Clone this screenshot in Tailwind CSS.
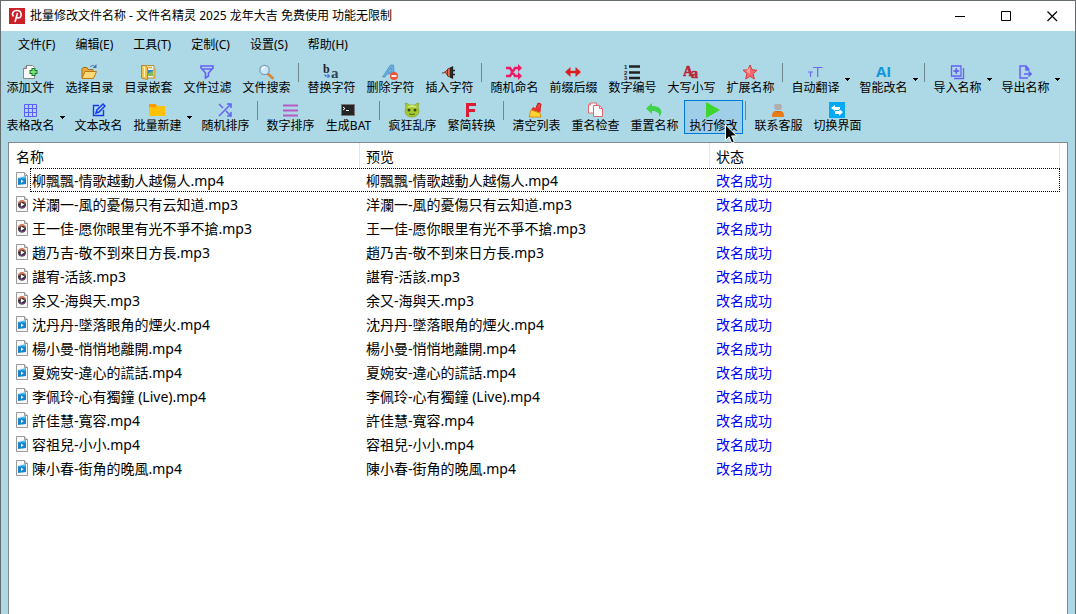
<!DOCTYPE html>
<html lang="zh-CN">
<head>
    <meta charset="UTF-8">
    <meta name="viewport" content="width=device-width, initial-scale=1.0">
    <title>批量修改文件名称</title>
    <script src="https://cdn.jsdelivr.net/npm/@tailwindcss/browser@4"></script>
</head>
<body class="font-['Noto_Sans','Noto_Sans_CJK_SC',sans-serif] text-black bg-[#add8e6]">
    <!-- 图标 -->
    <svg class="hidden">
        <symbol id="add" viewBox="0 0 16 16"><path d="M4.500 1.500h6l2 2v11h-11v-10z" fill="#f8f8f8" stroke="#888"/><path d="M4.500 1.500v3h-3" fill="#ccc" stroke="#777"/><path d="M11.500 4v8M7.500 8h8" stroke="#1b7a2b" stroke-width="4"/><path d="M11.500 5v6M8.500 8h6" stroke="#7be27b" stroke-width="2"/></symbol>
        <symbol id="open" viewBox="0 0 16 16"><path d="M1 14V4.500l1-1h4l1 2h5V8" fill="#e9a93a" stroke="#a87018"/><path d="M1 14.500l3-7h11.500l-3 7z" fill="#ffd878" stroke="#b87a1a"/><path d="M9 3c2-2 4-2 5 0" fill="none" stroke="#47729c"/><path d="M11.500 4h4V0z" fill="#47729c"/></symbol>
        <symbol id="nest" viewBox="0 0 16 16"><path d="M6 1.500h8v12.500H6z" fill="#e9f1f8" stroke="#b99338"/><path d="M7 6h6v6H7z" fill="#3b83c4"/><path d="M7 10l6-3v5H7z" fill="#82bd4e"/><path d="M1.500 1.500h4l2 2v12l-6-1.500z" fill="#f1c351" stroke="#b88824"/><path d="M3 3h1.500v10" stroke="#fff1a8" fill="none"/><path d="M8 3.500h4M13 5h2v9h-2" stroke="#e7ad31" fill="none" stroke-width="1.300"/></symbol>
        <symbol id="filter" viewBox="0 0 16 16"><path d="M2 2h12v2L9.500 9v3L6.500 14V9L2 4zM3 5h10" fill="none" stroke="#6461f5" stroke-width="1.600"/></symbol>
        <symbol id="search" viewBox="0 0 16 16"><path d="M9.500 9.500l5 4.500" stroke="#d78a38" stroke-width="3" stroke-linecap="round"/><circle cx="6.500" cy="6" r="4.700" fill="#c9e7fb" stroke="#829fba" stroke-width="1.300"/><path d="M4 5.500q1-2.500 3-2.500" fill="none" stroke="#fff" stroke-width="1.500"/></symbol>
        <symbol id="replace" viewBox="0 0 16 16"><text x="0" y="9" font-family="Liberation Serif" font-weight="bold" font-size="12" fill="#222">b</text><text x="8" y="14" font-family="Liberation Serif" font-weight="bold" font-size="15" fill="#345">a</text><path d="M2 10.500V12h4.500M4.500 10l2 2-2 2" fill="none" stroke="#2b58d8"/></symbol>
        <symbol id="delete" viewBox="0 0 16 16"><path d="M.5 13L8.500 1h3l1 12H9l-.3-3H5l-2 3zM6 8h3V4z" fill="#6aaee6" stroke="#377fbc" stroke-width=".6"/><circle cx="12" cy="12" r="4" fill="#ef5537"/><path d="M9.500 12h5" stroke="#fff" stroke-width="1.800"/></symbol>
        <symbol id="plug" viewBox="0 0 16 16"><path d="M1 9c2 0 3-1 4-1" fill="none" stroke="#666" stroke-width="1.500"/><path d="M4 8l3-3v7z" fill="#e8694b" stroke="#903325"/><path d="M6.500 5l3-1v9l-3-1z" fill="#e8694b" stroke="#7d2d22"/><path d="M9.500 4l2-1v11l-2-1zM11 6.500h3M11 10.500h3" fill="#333" stroke="#222" stroke-width="1.300"/></symbol>
        <symbol id="shuffle" viewBox="0 0 16 16"><path d="M0 4h4l5 8h4M0 12h4l5-8h4" fill="none" stroke="#ee1b64" stroke-width="2.400"/><path d="M12 0l4 4-4 4zM12 8l4 4-4 4z" fill="#ee1b64"/></symbol>
        <symbol id="width" viewBox="0 0 16 16"><path d="M3 8h10" stroke="#d91f1f" stroke-width="2.400"/><path d="M5.500 3v10L0 8zM10.500 3v10L16 8z" fill="#d91f1f"/></symbol>
        <symbol id="number" viewBox="0 0 16 16"><path d="M5 2.500h11M5 8.500h11M5 14h11" stroke="#222" stroke-width="2.500"/><g font-family="Liberation Sans" font-weight="bold" font-size="6" fill="#222"><text x="0" y="5">1</text><text x="0" y="11">2</text><text x="0" y="16">3</text></g></symbol>
        <symbol id="case" viewBox="0 0 16 16"><g font-family="Liberation Serif" font-weight="bold" fill="#b8253b" stroke="#b8253b" stroke-width=".6"><text x="0" y="12" font-size="14">A</text><text x="8" y="14" font-size="14">a</text></g></symbol>
        <symbol id="star" viewBox="0 0 16 16"><path d="M8 1l2 4.700 5 .5-3.800 3.500L12.300 15 8 12.300 3.700 15l1.100-5.300L1 6.200l5-.5z" fill="#f46a6a" stroke="#d73e42"/><path d="M8 3v7l-4-3" fill="#ff9c95"/></symbol>
        <symbol id="translate" viewBox="0 0 16 16"><path d="M6 3.500h9.500M10.700 3.500V13M1 8h5M3.500 8v5" fill="none" stroke="#6c69f2" stroke-width="1.200"/></symbol>
        <symbol id="ai" viewBox="0 0 16 16"><text x="1" y="13" font-family="Open Sans" font-weight="bold" font-size="15" fill="#1296db">AI</text></symbol>
        <symbol id="import" viewBox="0 0 16 16"><path d="M2.500 2h9.500v10H2.500zM5 14.500h9.500V4M7.300 4v6M4.300 7h6" fill="none" stroke="#6461f5" stroke-width="1.300"/><circle cx="7.300" cy="7" r="1.700" fill="#6461f5"/></symbol>
        <symbol id="export" viewBox="0 0 16 16"><path d="M12 5.500L9 2H3v12h8M9 2v4h3.500M7 10h7M11.500 7.500L14.200 10l-2.700 2.500" fill="none" stroke="#6461f5" stroke-width="1.500"/></symbol>
        <symbol id="grid" viewBox="0 0 16 16"><path d="M2.500 2.500h12v12h-12zM6.500 2v13M10.500 2v13M2 6.500h13M2 10.500h13" fill="none" stroke="#5d5cff"/></symbol>
        <symbol id="edit" viewBox="0 0 16 16"><path d="M9 3.500H3.500v10h10V8" fill="none" stroke="#1238f0" stroke-width="1.400"/><path d="M6 11l1-3 6-6 2 2-6 6z" fill="none" stroke="#1238f0" stroke-width="1.500"/></symbol>
        <symbol id="folder" viewBox="0 0 16 16"><path d="M0 2h6l2 2v3H0z" fill="#ff9800"/><path d="M0 4h16v10H0z" fill="#ffc107"/><path d="M0 2h6l2 2-2 1H0z" fill="#ff9800"/></symbol>
        <symbol id="random" viewBox="0 0 16 16"><path d="M2 14L14 2M2 2l4 4M9 9l5 5M10 2h4v4M14 10v4h-4" fill="none" stroke="#6461f5" stroke-width="1.500"/></symbol>
        <symbol id="lines" viewBox="0 0 16 16"><path d="M1 3.500h15M1 8.500h15M1 13.500h15" stroke="#b75bc4" stroke-width="1.800"/></symbol>
        <symbol id="bat" viewBox="0 0 16 16"><path d="M1.500 2.500h13v11h-13z" fill="#242424" stroke="#777"/><path d="M3 5l2 1.500L3 8M6 8.500h3" fill="none" stroke="#fff"/></symbol>
        <symbol id="monster" viewBox="0 0 16 16"><path d="M2 5L1 1q3 0 4 2h6q1-2 4-2l-1 4q1 2 1 4c0 8-14 8-14 0q0-2 1-4z" fill="#a5c832" stroke="#7c9a25" stroke-width=".6"/><path d="M4 5.500q4-3 8 0" stroke="#d0eb65" fill="none" stroke-width="2"/><circle cx="5" cy="8" r="1.500" fill="#344718"/><circle cx="11" cy="8" r="1.500" fill="#344718"/><path d="M5 12q3 1 6 0" fill="none" stroke="#4c6817"/></symbol>
        <symbol id="simp" viewBox="0 0 16 16"><path d="M4.500 15V2.500H13M4.500 8.500H12" fill="none" stroke="#de1b35" stroke-width="3"/></symbol>
        <symbol id="clean" viewBox="0 0 16 16"><path d="M8 6l2-5 3 1-1 6z" fill="#ef3e32" stroke="#b42421"/><path d="M5 5l8 3-1 3-9-3z" fill="#e93228"/><path d="M3 8l9 3 1 4H1z" fill="#ffd331" stroke="#d99019"/></symbol>
        <symbol id="check" viewBox="0 0 16 16"><path d="M1.500 5V3l2-2h6v10h-8z" fill="#fff" stroke="#e06a72"/><path d="M6.500 3.500h6l3 3v8h-9z" fill="#fff" stroke="#e06a72"/><path d="M12.500 3.500v3h3M3.500 1v2h-2" fill="none" stroke="#e06a72"/></symbol>
        <symbol id="undo" viewBox="0 0 16 16"><path d="M6 1v3c9 0 12 6 7 11 1-4-2-6-7-6v3L0 6.500z" fill="#3fd34b"/></symbol>
        <symbol id="play" viewBox="0 0 16 16"><path d="M1 0l14 8-14 8z" fill="#3dd52e"/></symbol>
        <symbol id="service" viewBox="0 0 16 16"><path d="M5 2h6l1 2-1 4H5L4 4z" fill="#b2adb0"/><path d="M2 15v-2l1-3 2-1h6l2 1 1 3v2z" fill="#e67b17"/><path d="M6 9h4l-2 2z" fill="#c9650d"/></symbol>
        <symbol id="switch" viewBox="0 0 16 16"><path d="M0 0h16v16H0z" fill="#03a9f4"/><path d="M2 6l4-3v2h5v3H6v1zM14 10l-4-3v2H6v3h4v2z" fill="#fff"/></symbol>
        <symbol id="mp3" viewBox="0 0 12 16"><path d="M.5.500h8l3 3v12H.5z" fill="#f7f7f7" stroke="#9a9a9a"/><path d="M8.500.500v3h3" fill="#ddd" stroke="#9a9a9a"/><circle cx="6" cy="8.500" r="4" fill="#3b2b3b"/><path d="M2.500 7.500a3.700 3.700 0 0 1 7 0" fill="none" stroke="#d97852" stroke-width="1.300"/><path d="M3 10.500a3.700 3.700 0 0 0 6 0" fill="none" stroke="#80509a"/><path d="M4.800 6.200l3.700 2.300-3.700 2.300z" fill="#fff"/></symbol>
        <symbol id="mp4" viewBox="0 0 12 16"><path d="M.5.500h8l3 3v12H.5z" fill="#f7f7f7" stroke="#9a9a9a"/><path d="M8.500.500v3h3" fill="#ddd" stroke="#9a9a9a"/><path d="M2 6l8-2v3H2z" fill="#4cb8ea"/><path d="M2 6.500h8V12l-8 1z" fill="#1683cf"/><path d="M5 7.500l2.500 1.700L5 11z" fill="#fff"/></symbol>
    </svg>

    <div class="min-h-screen flex flex-col border-t border-x border-[#666b6e]">
        <!-- 标题栏 -->
        <header class="h-[30px] bg-white flex items-center pl-2">
            <svg class="size-4" viewBox="0 0 16 16"><path d="M0 0h16v16H0z" fill="#cb2027"/><path d="M4.500 8.500C2 5 4.500 2.500 8 2.500c5 0 5.500 7 1.500 7.500-1 0-1.500-.5-2-1M8.500 5L6 14" fill="none" stroke="#fff" stroke-width="1.600"/></svg>
            <h1 class="ml-[5px] text-xs">批量修改文件名称 - 文件名精灵 2025 龙年大吉 免费使用 功能无限制</h1>
            <div class="ml-auto flex h-full">
                <button class="w-[46px] flex items-center justify-center" aria-label="最小化"><svg class="size-[11px]" viewBox="0 0 11 11"><path d="M0 5.500h10" stroke="#000"/></svg></button>
                <button class="w-[46px] flex items-center justify-center" aria-label="最大化"><svg class="size-[11px]" viewBox="0 0 11 11"><path d="M.5.500h9v9h-9z" fill="none" stroke="#000"/></svg></button>
                <button class="w-[46px] flex items-center justify-center" aria-label="关闭"><svg class="size-[11px]" viewBox="0 0 11 11"><path d="M.5.500l9.500 9.500M10 .5L.5 10" stroke="#000" stroke-width="1.200"/></svg></button>
            </div>
        </header>

        <!-- 菜单 -->
        <nav class="h-[27px] flex items-center gap-5 pl-[17px] text-xs">
            <button>文件(F)</button>
            <button>编辑(E)</button>
            <button>工具(T)</button>
            <button>定制(C)</button>
            <button>设置(S)</button>
            <button>帮助(H)</button>
        </nav>

        <!-- 工具栏 -->
        <div class="flex flex-col gap-1 pt-1 pb-2 text-xs leading-4 whitespace-nowrap">
            <div id="bar1" class="flex h-[34px]"></div>
            <div id="bar2" class="flex h-[34px]"></div>
        </div>

        <!-- 文件列表 -->
        <main class="flex-1 mx-[7px] pr-[7px] bg-white border-t border-x border-[#828790]">
            <table class="w-full table-fixed border-separate border-spacing-0 text-sm text-left">
                <thead>
                    <tr class="h-[25px]">
                        <th class="w-[351px] pl-[7px] pt-0.5 leading-5 font-normal border-r border-[#e5e5e5]">名称</th>
                        <th class="w-[350px] pl-1.5 pt-0.5 leading-5 font-normal border-r border-[#e5e5e5]">预览</th>
                        <th class="pl-1.5 pt-0.5 leading-5 font-normal border-r border-[#e5e5e5]">状态</th>
                    </tr>
                </thead>
                <tbody id="rows"></tbody>
            </table>
        </main>
    </div>

    <script>
        // '|' 为分隔线, 第三项表示带下拉箭头
        const bar1 = [
            ['add', '添加文件'], ['open', '选择目录'], ['nest', '目录嵌套'], ['filter', '文件过滤'], ['search', '文件搜索'], '|',
            ['replace', '替换字符'], ['delete', '删除字符'], ['plug', '插入字符'], '|',
            ['shuffle', '随机命名'], ['width', '前缀后缀'], ['number', '数字编号'], ['case', '大写小写'], ['star', '扩展名称'], '|',
            ['translate', '自动翻译', true], ['ai', '智能改名', true], '|',
            ['import', '导入名称', true], ['export', '导出名称', true]
        ];
        const bar2 = [
            ['grid', '表格改名', true], ['edit', '文本改名'], ['folder', '批量新建', true], ['random', '随机排序'], '|',
            ['lines', '数字排序'], ['bat', '生成BAT'], '|',
            ['monster', '疯狂乱序'], ['simp', '繁简转换'], '|',
            ['clean', '清空列表'], ['check', '重名检查'], ['undo', '重置名称'], ['play', '执行修改'], '|',
            ['service', '联系客服'], ['switch', '切换界面']
        ];
        const files = [
            '柳飄飄-情歌越動人越傷人.mp4',
            '洋瀾一-風的憂傷只有云知道.mp3',
            '王一佳-愿你眼里有光不爭不搶.mp3',
            '趙乃吉-敬不到來日方長.mp3',
            '諶宥-活該.mp3',
            '余又-海與天.mp3',
            '沈丹丹-墜落眼角的煙火.mp4',
            '楊小曼-悄悄地離開.mp4',
            '夏婉安-違心的謊話.mp4',
            '李佩玲-心有獨鐘 (Live).mp4',
            '許佳慧-寬容.mp4',
            '容祖兒-小小.mp4',
            '陳小春-街角的晚風.mp4'
        ];

        const cursor = `<svg class="absolute left-[41px] top-6 w-3 h-5 z-10" viewBox="0 0 12 20"><path d="M.5.800v15.500l3.600-3.500 2.600 6.300 2.600-1.100-2.600-6.100h5z" fill="#000" stroke="#fff"/></svg>`;

        function toolButton([icon, label, drop]) {
            const active = icon === 'play';
            return `
                <button class="relative flex ${active ? 'bg-[#9fcfe8] outline outline-1 -outline-offset-1 outline-[#0078d7]' : 'hover:bg-[#9fcfe8]'}">
                    <span class="flex flex-col items-center px-[5px] pt-0.5 ${icon === 'bat' ? 'w-[57px]' : 'w-[59px]'}">
                        <svg class="size-4 mr-px"><use href="#${icon}"/></svg>
                        <span>${label}</span>
                    </span>
                    ${drop ? '<span class="w-[9px] pt-4"><svg class="w-[5px] h-[3px]" viewBox="0 0 5 3"><path d="M0 0h5v1H4v1H3v1H2V2H1V1H0z"/></svg></span>' : ''}
                    ${active ? cursor : ''}
                </button>`;
        }

        function renderBar(id, items) {
            document.getElementById(id).innerHTML = items.map(item =>
                item === '|' ? '<div class="w-1.5 pl-0.5 pt-px"><div class="w-px h-[19px] bg-[#6f8790]"></div></div>' : toolButton(item)
            ).join('');
        }

        renderBar('bar1', bar1);
        renderBar('bar2', bar2);

        document.getElementById('rows').innerHTML = files.map((name, i) => `
            <tr class="relative h-6 leading-[22px] whitespace-nowrap">
                <td class="pl-[7px]">
                    <div class="flex items-center gap-1">
                        <svg class="w-3 h-4"><use href="#${name.slice(-3)}"/></svg>
                        <span class="pt-0.5">${name}</span>
                    </div>
                    ${i === 0 ? '<div class="absolute inset-y-0 left-[21px] right-0 border border-dotted border-black"></div>' : ''}
                </td>
                <td class="pl-1.5 pt-0.5">${name}</td>
                <td class="pl-1.5 pt-0.5 text-[#0000ff]">改名成功</td>
            </tr>`).join('');
    </script>
</body>
</html>
